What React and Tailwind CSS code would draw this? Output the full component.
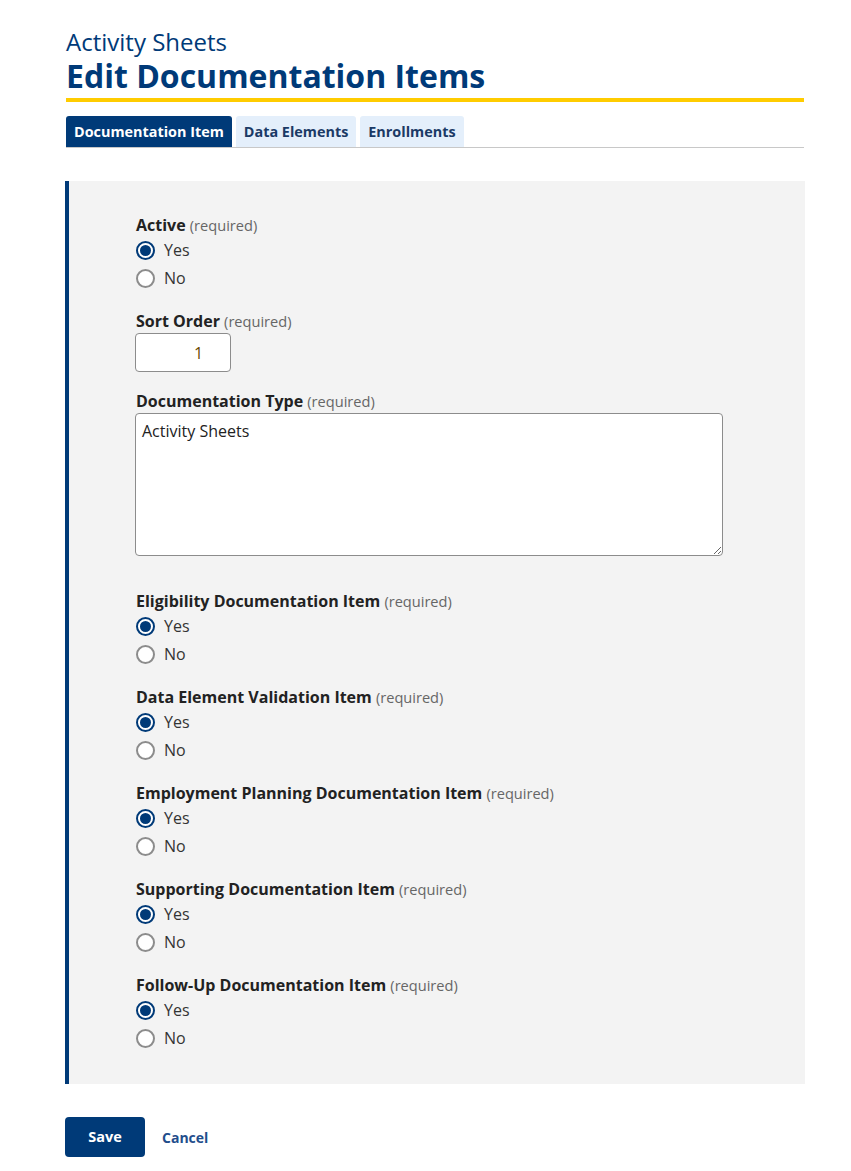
import React, { useState } from "react";

const Radio = ({ checked, label, onClick }) => (
  <label onClick={onClick} className="flex items-center gap-[9px] h-[28px] cursor-pointer">
    <span
      className={`w-[19px] h-[19px] rounded-full bg-white flex items-center justify-center border-2 ${
        checked ? "border-[#003a78]" : "border-[#8c8c8c]"
      }`}
    >
      {checked && <span className="w-[11px] h-[11px] rounded-full bg-[#003a78]" />}
    </span>
    <span className="text-[16px] text-[#333]">{label}</span>
  </label>
);

const FieldLabel = ({ children }) => (
  <div className="h-[22px] leading-[22px]">
    <span className="text-[16px] font-bold text-[#222]">{children}</span>{" "}
    <span className="text-[14.6px] text-[#666]">(required)</span>
  </div>
);

const YesNo = ({ label, value, onChange }) => (
  <div className="mb-[18px] last:mb-0">
    <FieldLabel>{label}</FieldLabel>
    <Radio checked={value} label="Yes" onClick={() => onChange(true)} />
    <Radio checked={!value} label="No" onClick={() => onChange(false)} />
  </div>
);

export default function App() {
  const [values, setValues] = useState({
    active: true,
    eligibility: true,
    validation: true,
    planning: true,
    supporting: true,
    followUp: true,
  });
  const set = (k) => (v) => setValues((p) => ({ ...p, [k]: v }));

  const tabs = ["Documentation Item", "Data Elements", "Enrollments"];

  return (
    <div className="min-h-screen bg-white font-['Open_Sans',sans-serif] pb-[14px]">
      <div className="ml-[66px] w-[738px] pt-[28px]">
        {/* HEADER */}
        <div className="text-[24px] leading-[28px] text-[#003a78]">Activity Sheets</div>
        <h1 className="text-[32px] leading-[40px] font-bold text-[#003a78]">
          Edit Documentation Items
        </h1>
        <div className="h-[4px] bg-[#ffcc00] mt-[2px]" />

        {/* TABS */}
        <div className="flex gap-[3px] mt-[14px] border-b border-[#c8c8c8]">
          {tabs.map((t, i) => (
            <div
              key={t}
              className={`h-[31px] px-[8px] flex items-center text-[14.4px] font-bold rounded-t-[3px] ${
                i === 0 ? "bg-[#003a78] text-white" : "bg-[#e4effb] text-[#1b3a66] ml-[1px]"
              }`}
            >
              {t}
            </div>
          ))}
        </div>
      </div>

      {/* FORM PANEL */}
      <div className="ml-[65px] w-[740px] mt-[33px] bg-[#f3f3f3] border-l-4 border-[#003a78] pl-[67px] pt-[33px] pb-[32px]">
        <YesNo label="Active" value={values.active} onChange={set("active")} />

        <div className="mb-[18px]">
          <FieldLabel>Sort Order</FieldLabel>
          <input
            defaultValue="1"
            className="block mt-[1px] -ml-px w-[96px] h-[39px] bg-white border border-[#8c8c8c] rounded-[4px] text-[16px] text-[#6b4a00] pl-[58px]"
          />
        </div>

        <div className="mb-[34px]">
          <FieldLabel>Documentation Type</FieldLabel>
          <textarea
            defaultValue="Activity Sheets"
            className="block mt-[1px] -ml-px w-[588px] h-[143px] bg-white border border-[#8c8c8c] rounded-[4px] text-[16px] text-[#222] px-[6px] py-[5px] resize"
          />
        </div>

        <YesNo label="Eligibility Documentation Item" value={values.eligibility} onChange={set("eligibility")} />
        <YesNo label="Data Element Validation Item" value={values.validation} onChange={set("validation")} />
        <YesNo label="Employment Planning Documentation Item" value={values.planning} onChange={set("planning")} />
        <YesNo label="Supporting Documentation Item" value={values.supporting} onChange={set("supporting")} />
        <YesNo label="Follow-Up Documentation Item" value={values.followUp} onChange={set("followUp")} />
      </div>

      {/* ACTIONS */}
      <div className="ml-[65px] mt-[33px] flex items-center gap-[17px]">
        <button className="w-[80px] h-[40px] rounded-[4px] bg-[#003a78] text-white text-[14.5px] font-bold">
          Save
        </button>
        <button className="text-[14px] font-bold text-[#1f4e8c]">Cancel</button>
      </div>
    </div>
  );
}
